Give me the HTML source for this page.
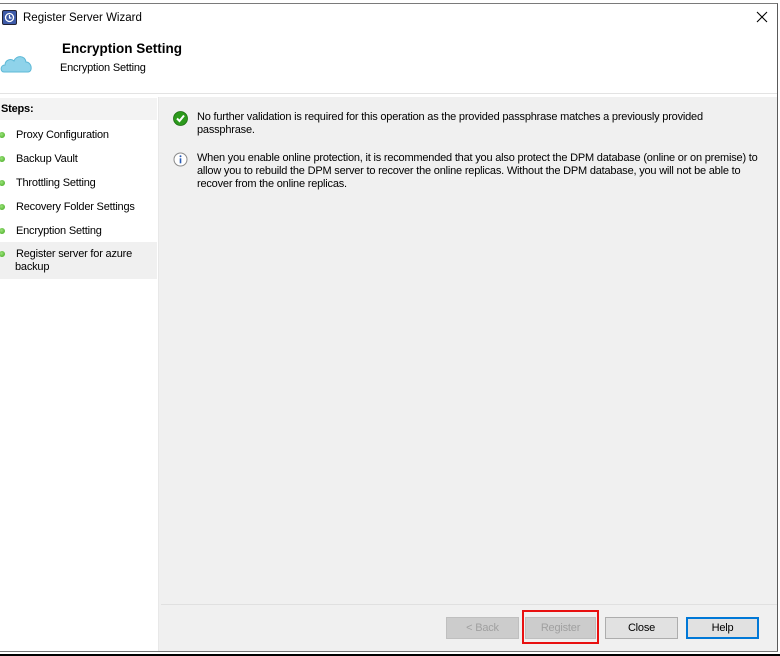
<!DOCTYPE html>
<html><head><style>
*{margin:0;padding:0;box-sizing:border-box}
body{width:780px;height:656px;background:#fff;position:relative;overflow:hidden;font-family:"Liberation Sans",Arial,sans-serif;font-size:11px;letter-spacing:-0.2px;color:#000}
.a{position:absolute;white-space:nowrap}
.win{left:0;top:3px;width:778px;height:649px;border-top:1px solid #7a7a7a;border-right:1px solid #5a5a5a;background:#fff}
.btn{position:absolute;top:617px;height:22px;background:#e1e1e1;border:1px solid #adadad;text-align:center;line-height:20px;font-size:11px}
.dot{position:absolute;left:-1px;width:6px;height:6px;border-radius:50%;background:radial-gradient(circle at 40% 40%,#9be37a,#3ea51c)}
.step{position:absolute;left:16px;white-space:nowrap}
</style></head><body>
<div class="a win"></div>
<div class="a" style="left:2px;top:10px;width:15px;height:15px;background:#3d5aa8;border:1px solid #223;border-radius:2px"></div>
<svg class="a" style="left:4px;top:12px" width="11" height="11" viewBox="0 0 11 11"><circle cx="5.5" cy="5.5" r="4" fill="none" stroke="#fff" stroke-width="1.3"/><path d="M5.5 3v3h2" fill="none" stroke="#fff" stroke-width="1.2"/></svg>
<div class="a" style="left:23px;top:12px;font-size:11.5px;letter-spacing:0">Register Server Wizard</div>
<svg class="a" style="left:756px;top:11px" width="12" height="12" viewBox="0 0 12 12"><path d="M1 1L11 11M11 1L1 11" stroke="#000" stroke-width="1.1"/></svg>
<svg class="a" style="left:0;top:52px" width="33" height="22" viewBox="0 0 33 22"><path d="M4 20C0 20 0 13 5 13C5 8 11 6 14 9C16 3 25 3 26 10C32 10 33 20 28 20Z" fill="#8fd3ea" stroke="#5cb8d6"/></svg>
<div class="a" style="left:62px;top:41px;font-weight:bold;font-size:13.5px;letter-spacing:0">Encryption Setting</div>
<div class="a" style="left:60px;top:62px">Encryption Setting</div>
<div class="a" style="left:0;top:93px;width:777px;height:1px;background:#e3e3e3"></div>
<div class="a" style="left:158px;top:97px;width:3px;height:555px;background:#f0f0f0;border-left:1px solid #e8e8e8"></div>
<div class="a" style="left:0;top:98px;width:157px;height:22px;background:#f3f3f3"></div>
<div class="a" style="left:1px;top:103px;font-weight:bold">Steps:</div>
<div class="dot" style="top:132px"></div><div class="step" style="top:129px">Proxy Configuration</div>
<div class="dot" style="top:156px"></div><div class="step" style="top:153px">Backup Vault</div>
<div class="dot" style="top:180px"></div><div class="step" style="top:177px">Throttling Setting</div>
<div class="dot" style="top:204px"></div><div class="step" style="top:201px">Recovery Folder Settings</div>
<div class="dot" style="top:228px"></div><div class="step" style="top:225px">Encryption Setting</div>
<div class="a" style="left:0;top:242px;width:157px;height:37px;background:#f0f0f0"></div>
<div class="dot" style="top:251px"></div><div class="step" style="top:248px;line-height:13px">Register server for azure<br><span style="margin-left:-1px">backup</span></div>
<div class="a" style="left:161px;top:97px;width:616px;height:555px;background:#f0f0f0"></div>
<div class="a" style="left:161px;top:604px;width:616px;height:1px;background:#fff;border-top:1px solid #e0e0e0"></div>
<svg class="a" style="left:173px;top:111px" width="15" height="15" viewBox="0 0 15 15"><circle cx="7.5" cy="7.5" r="7" fill="#2c9a1c" stroke="#1d6e12" stroke-width=".8"/><path d="M4 7.5L6.5 10L11 4.5" fill="none" stroke="#fff" stroke-width="2"/></svg>
<div class="a" style="left:197px;top:111px;line-height:13px">No further validation is required for this operation as the provided passphrase matches a previously provided<br>passphrase.</div>
<svg class="a" style="left:173px;top:152px" width="15" height="15" viewBox="0 0 15 15"><circle cx="7.5" cy="7.5" r="6.5" fill="#fff" stroke="#8a8a8a"/><circle cx="7.5" cy="4.3" r="1" fill="#2a5bb5"/><rect x="6.7" y="6.3" width="1.6" height="5" fill="#2a5bb5"/></svg>
<div class="a" style="left:197px;top:152px;line-height:13px">When you enable online protection, it is recommended that you also protect the DPM database (online or on premise) to<br>allow you to rebuild the DPM server to recover the online replicas. Without the DPM database, you will not be able to<br>recover from the online replicas.</div>
<div class="btn" style="left:446px;width:73px;color:#a0a0a0;background:#cccccc;border-color:#bfbfbf">&lt; Back</div>
<div class="btn" style="left:525px;width:71px;color:#a0a0a0;background:#cccccc;border-color:#bfbfbf">Register</div>
<div class="a" style="left:522px;top:610px;width:77px;height:34px;border:2px solid #e81010"></div>
<div class="btn" style="left:605px;width:73px">Close</div>
<div class="btn" style="left:686px;width:73px;border:2px solid #0078d7;line-height:18px">Help</div>
<div class="a" style="left:0;top:651px;width:778px;height:1px;background:#777"></div>
<div class="a" style="left:0;top:654px;width:780px;height:2px;background:#000"></div>
</body></html>
